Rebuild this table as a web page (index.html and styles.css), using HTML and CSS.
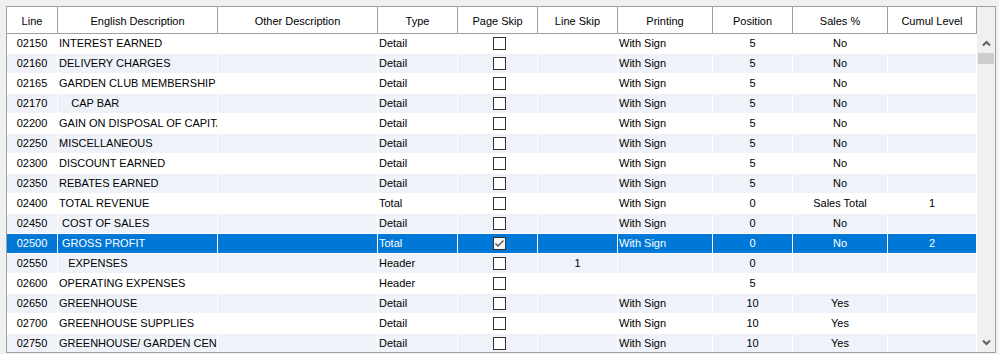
FILE: index.html
```html
<!DOCTYPE html>
<html lang="en">
<head>
    <meta charset="UTF-8">
    <title>Report Lines</title>
    <link rel="stylesheet" href="styles.css">
</head>
<body>
    <div class="frame">
        <div class="table">
            <div class="cols head">
                <span>Line</span>
                <span>English Description</span>
                <span>Other Description</span>
                <span>Type</span>
                <span>Page Skip</span>
                <span>Line Skip</span>
                <span>Printing</span>
                <span>Position</span>
                <span>Sales %</span>
                <span>Cumul Level</span>
            </div>

            <div class="cols row">
                <div class="c">02150</div><div>INTEREST EARNED</div><div></div><div>Detail</div>
                <div class="c"><span class="check"></span></div><div></div><div>With Sign</div>
                <div class="c">5</div><div class="c">No</div><div></div>
            </div>
            <div class="cols row alt">
                <div class="c">02160</div><div>DELIVERY CHARGES</div><div></div><div>Detail</div>
                <div class="c"><span class="check"></span></div><div></div><div>With Sign</div>
                <div class="c">5</div><div class="c">No</div><div></div>
            </div>
            <div class="cols row">
                <div class="c">02165</div><div>GARDEN CLUB MEMBERSHIP</div><div></div><div>Detail</div>
                <div class="c"><span class="check"></span></div><div></div><div>With Sign</div>
                <div class="c">5</div><div class="c">No</div><div></div>
            </div>
            <div class="cols row alt">
                <div class="c">02170</div><div>    CAP BAR</div><div></div><div>Detail</div>
                <div class="c"><span class="check"></span></div><div></div><div>With Sign</div>
                <div class="c">5</div><div class="c">No</div><div></div>
            </div>
            <div class="cols row">
                <div class="c">02200</div><div>GAIN ON DISPOSAL OF CAPITAL ASSETS</div><div></div><div>Detail</div>
                <div class="c"><span class="check"></span></div><div></div><div>With Sign</div>
                <div class="c">5</div><div class="c">No</div><div></div>
            </div>
            <div class="cols row alt">
                <div class="c">02250</div><div>MISCELLANEOUS</div><div></div><div>Detail</div>
                <div class="c"><span class="check"></span></div><div></div><div>With Sign</div>
                <div class="c">5</div><div class="c">No</div><div></div>
            </div>
            <div class="cols row">
                <div class="c">02300</div><div>DISCOUNT EARNED</div><div></div><div>Detail</div>
                <div class="c"><span class="check"></span></div><div></div><div>With Sign</div>
                <div class="c">5</div><div class="c">No</div><div></div>
            </div>
            <div class="cols row alt">
                <div class="c">02350</div><div>REBATES EARNED</div><div></div><div>Detail</div>
                <div class="c"><span class="check"></span></div><div></div><div>With Sign</div>
                <div class="c">5</div><div class="c">No</div><div></div>
            </div>
            <div class="cols row">
                <div class="c">02400</div><div>TOTAL REVENUE</div><div></div><div>Total</div>
                <div class="c"><span class="check"></span></div><div></div><div>With Sign</div>
                <div class="c">0</div><div class="c">Sales Total</div><div class="c">1</div>
            </div>
            <div class="cols row alt">
                <div class="c">02450</div><div> COST OF SALES</div><div></div><div>Detail</div>
                <div class="c"><span class="check"></span></div><div></div><div>With Sign</div>
                <div class="c">0</div><div class="c">No</div><div></div>
            </div>
            <div class="cols row sel">
                <div class="c">02500</div><div> GROSS PROFIT</div><div></div><div>Total</div>
                <div class="c"><span class="check on"><svg width="11" height="11" viewBox="0 0 11 11"><polyline points="1.5,5.5 4,8 9.5,2.5" fill="none" stroke="#555" stroke-width="1.4"/></svg></span></div>
                <div></div><div>With Sign</div>
                <div class="c">0</div><div class="c">No</div><div class="c">2</div>
            </div>
            <div class="cols row alt">
                <div class="c">02550</div><div>   EXPENSES</div><div></div><div>Header</div>
                <div class="c"><span class="check"></span></div><div class="c">1</div><div></div>
                <div class="c">0</div><div></div><div></div>
            </div>
            <div class="cols row">
                <div class="c">02600</div><div>OPERATING EXPENSES</div><div></div><div>Header</div>
                <div class="c"><span class="check"></span></div><div></div><div></div>
                <div class="c">5</div><div></div><div></div>
            </div>
            <div class="cols row alt">
                <div class="c">02650</div><div>GREENHOUSE</div><div></div><div>Detail</div>
                <div class="c"><span class="check"></span></div><div></div><div>With Sign</div>
                <div class="c">10</div><div class="c">Yes</div><div></div>
            </div>
            <div class="cols row">
                <div class="c">02700</div><div>GREENHOUSE SUPPLIES</div><div></div><div>Detail</div>
                <div class="c"><span class="check"></span></div><div></div><div>With Sign</div>
                <div class="c">10</div><div class="c">Yes</div><div></div>
            </div>
            <div class="cols row alt">
                <div class="c">02750</div><div>GREENHOUSE/ GARDEN CENTRE</div><div></div><div>Detail</div>
                <div class="c"><span class="check"></span></div><div></div><div>With Sign</div>
                <div class="c">10</div><div class="c">Yes</div><div></div>
            </div>
        </div>

        <div class="scroll">
            <div class="scroll-head"></div>
            <div class="arrow">
                <svg width="9" height="7" viewBox="0 0 9 7"><polyline points="1,5.5 4.5,2 8,5.5" fill="none" stroke="#606060" stroke-width="2"/></svg>
            </div>
            <div class="thumb"></div>
            <div class="track"></div>
            <div class="arrow">
                <svg width="9" height="7" viewBox="0 0 9 7"><polyline points="1,1.5 4.5,5 8,1.5" fill="none" stroke="#606060" stroke-width="2"/></svg>
            </div>
        </div>
    </div>
</body>
</html>
```

FILE: styles.css
```css
body {
    margin: 0;
    background-color: #f0f0f0;
    font-family: "Liberation Sans", Arial, sans-serif;
    font-size: 11px;
    color: #000;
}
.frame {
    margin: 6px 0 0 6px;
    width: 990px;
    height: 347px;
    box-sizing: border-box;
    border: 1px solid #a0a0a0;
    background-color: #ffffff;
    display: flex;
    overflow: hidden;
}
.table {
    width: 970px;
    overflow: hidden;
}
.cols {
    display: grid;
    grid-template-columns: 51px 160px 160px 80px 80px 80px 95px 80px 95px 89px;
}
.head {
    height: 27px;
    box-sizing: border-box;
    border-bottom: 1px solid #a0a0a0;
}
.head span {
    display: flex;
    align-items: center;
    justify-content: center;
    padding-top: 2px;
    border-right: 1px solid #a0a0a0;
    white-space: nowrap;
}
.row {
    height: 20px;
}
.row > div {
    border-right: 1px solid #ffffff;
    border-bottom: 1px solid #ffffff;
    line-height: 19px;
    padding-left: 1px;
    white-space: pre;
    overflow: hidden;
}
.row > .c {
    padding-left: 0;
    text-align: center;
    display: flex;
    align-items: center;
    justify-content: center;
}
.row.alt > div {
    background-color: #eff3f9;
}
.row.sel > div {
    background-color: #0078d7;
    color: #ffffff;
}
.check {
    width: 13px;
    height: 13px;
    box-sizing: border-box;
    border: 1px solid #333333;
    background-color: #ffffff;
    margin-left: 3px;
    display: flex;
    align-items: center;
    justify-content: center;
}
.check.on {
    background-color: #f4f4f4;
}
.scroll {
    width: 18px;
    background-color: #f0f0f0;
    display: flex;
    flex-direction: column;
}
.scroll-head {
    height: 27px;
}
.arrow {
    height: 19px;
    display: flex;
    align-items: center;
    justify-content: center;
}
.thumb {
    height: 11px;
    margin: 0 1px;
    background-color: #cdcdcd;
}
.track {
    flex: 1;
}
```
